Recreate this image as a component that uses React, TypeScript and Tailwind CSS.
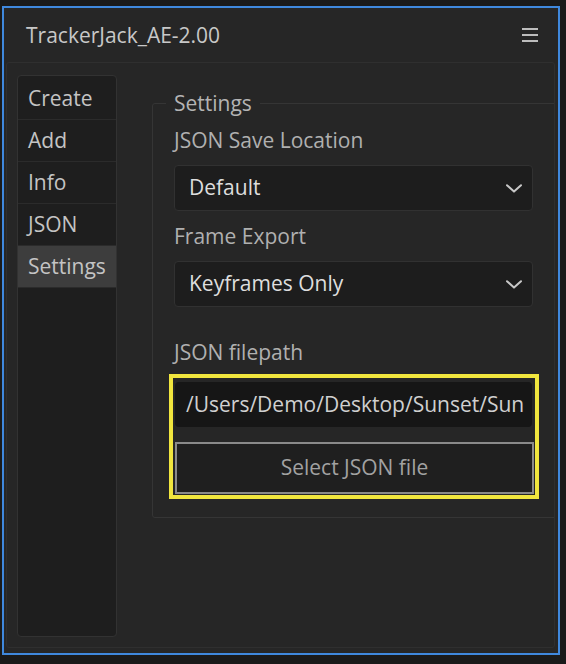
const tabs = ['Create', 'Add', 'Info', 'JSON', 'Settings'];

function Select({ value }: { value: string }) {
  return (
    <div className="flex h-[46px] w-[359px] items-center justify-between rounded-[4px] border border-[#313131] bg-[#1d1d1d] pl-[14px] pr-[10px]">
      <span className="text-[21px] font-medium text-[#dedede]">{value}</span>
      <svg width="16" height="9" viewBox="0 0 16 9" fill="none">
        <path d="M1 1.2L8 7.6L15 1.2" stroke="#c8c8c8" strokeWidth="2" strokeLinecap="round" strokeLinejoin="round" />
      </svg>
    </div>
  );
}

export default function App() {
  return (
    <div
      className="h-[664px] w-[566px] bg-[#1a1a1a] pt-[6px]"
      style={{ fontFamily: '"Open Sans", "Noto Sans", sans-serif' }}
    >
      <div className="ml-[2px] flex h-[649px] w-[558px] flex-col border-2 border-[#3f88dd] bg-[#262626]">
        {/* Header */}
        <div className="flex h-[54px] shrink-0 items-center justify-between pl-[22px] pr-[20px]">
          <span className="text-[21px] leading-none text-[#c8c8c8]">TrackerJack_AE-2.00</span>
          <div className="flex w-[16px] flex-col gap-[4px]">
            <span className="h-[2px] w-full bg-[#bdbdbd]" />
            <span className="h-[2px] w-full bg-[#bdbdbd]" />
            <span className="h-[2px] w-full bg-[#bdbdbd]" />
          </div>
        </div>

        {/* Panel */}
        <div className="mb-[5px] ml-[2px] mr-[3px] flex flex-1 gap-[35px] overflow-hidden rounded-[3px] border border-[#2f2f2f] bg-[#262626] pb-[10px] pl-[10px] pt-[12px]">
          {/* Tabs */}
          <div className="flex w-[100px] shrink-0 flex-col rounded-[4px] border border-[#323232] bg-[#1e1e1e] pt-[2px]">
            {tabs.map((t) => (
              <div
                key={t}
                className={`flex h-[42px] items-center border-b border-[#2b2b2b] pl-[10px] text-[21px] text-[#c4c4c4] ${
                  t === 'Settings' ? 'bg-[#3d3d3d]' : ''
                }`}
              >
                {t}
              </div>
            ))}
          </div>

          {/* Settings */}
          <div className="pt-[16px]">
            <fieldset className="w-[420px] rounded-[3px] border border-[#353535] pb-[18px]">
              <legend className="ml-[13px] px-[8px] text-[21px] leading-[24px] text-[#b4b4b4]">Settings</legend>
              <div className="flex flex-col pl-[21px]">
                <div className="mt-[13px] text-[21px] leading-[24px] text-[#b0b0b0]">JSON Save Location</div>
                <div className="mt-[13px]">
                  <Select value="Default" />
                </div>
                <div className="mt-[13px] text-[21px] leading-[24px] text-[#b0b0b0]">Frame Export</div>
                <div className="mt-[13px]">
                  <Select value="Keyframes Only" />
                </div>
                <div className="mt-[33px] text-[21px] leading-[24px] text-[#b0b0b0]">JSON filepath</div>
                <div className="ml-[-5px] mt-[10px] flex h-[125px] w-[370px] flex-col border-4 border-[#f1e63e] pl-[2px] pr-[1px] pt-[4px]">
                  <div className="flex h-[45px] w-[357px] items-center overflow-hidden whitespace-nowrap rounded-[4px] bg-[#161616] pl-[11px] text-[21px] text-[#d0d0d0]">
                    /Users/Demo/Desktop/Sunset/Sun
                  </div>
                  <button className="mt-[15px] flex h-[52px] w-[359px] items-center justify-center border-2 border-[#8a8a8a] bg-[#1f1f1f] text-[21px] text-[#a2a2a2]">
                    Select JSON file
                  </button>
                </div>
              </div>
            </fieldset>
          </div>
        </div>
      </div>
    </div>
  );
}
